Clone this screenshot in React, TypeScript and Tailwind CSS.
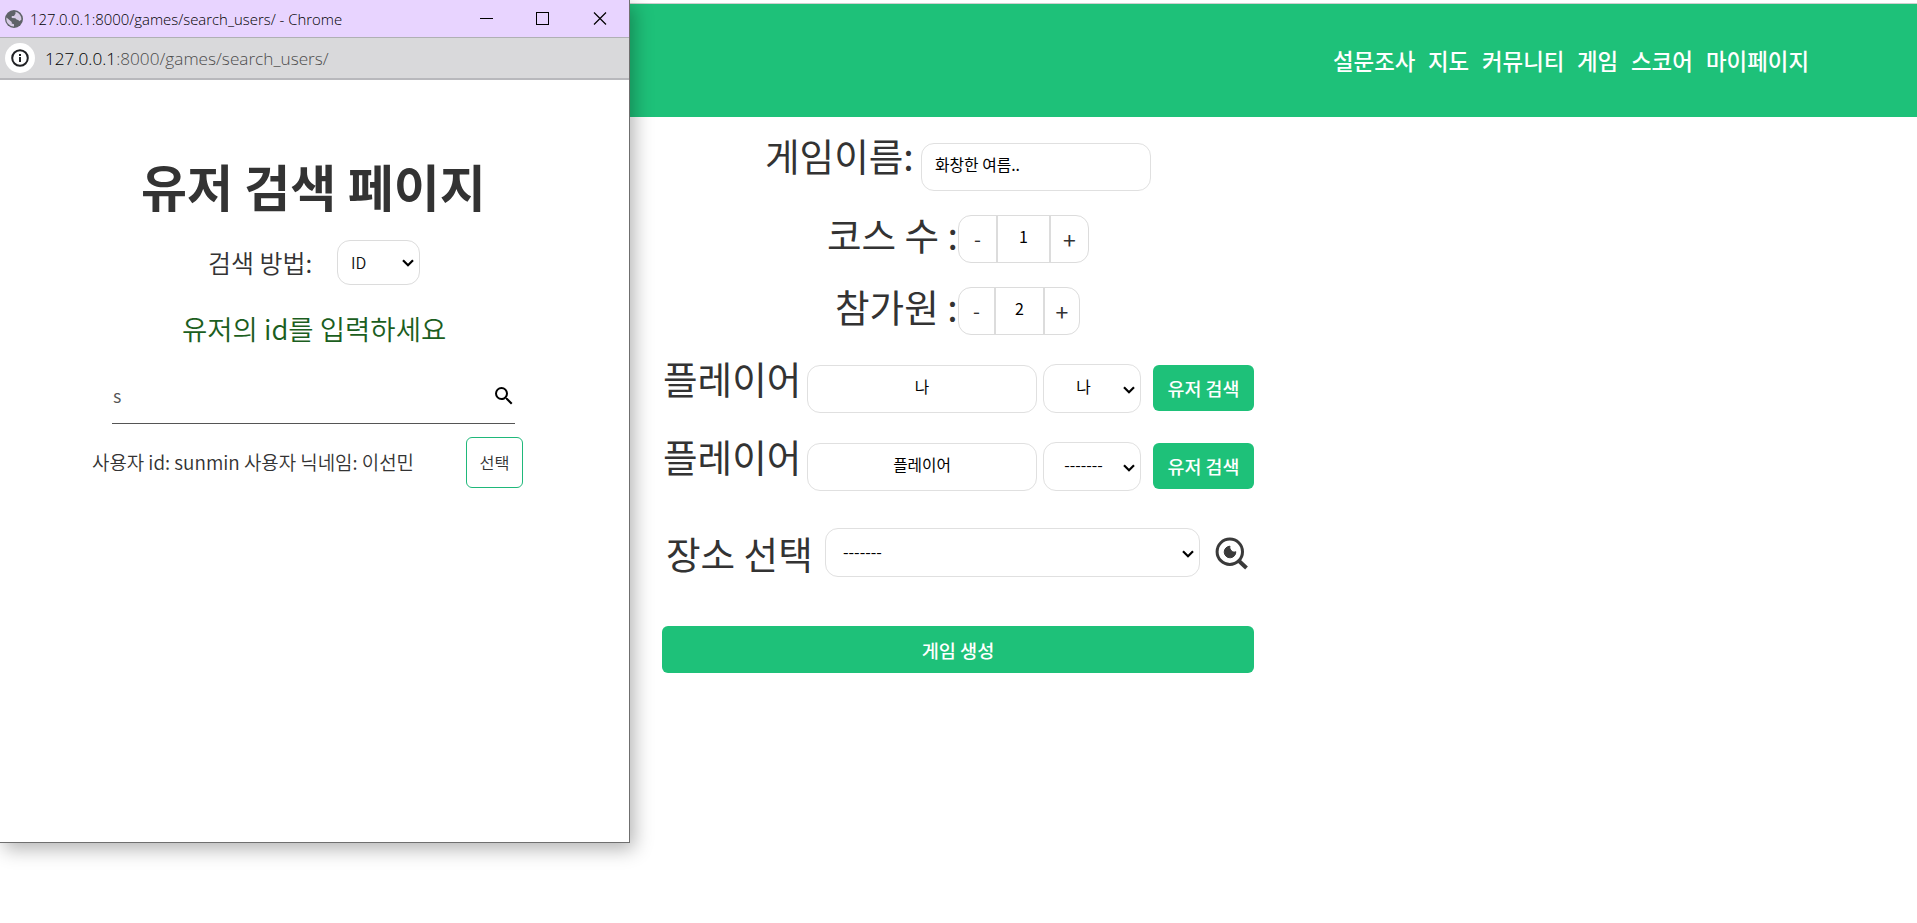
import type { ReactNode } from "react";
import { MdSearch } from "react-icons/md";

const NAV = [
  { label: "설문조사", width: "w-[95px]" },
  { label: "지도", width: "w-[54px]" },
  { label: "커뮤니티", width: "w-[95px]" },
  { label: "게임", width: "w-[54px]" },
  { label: "스코어", width: "w-[75px]" },
  { label: "마이페이지", width: "w-[110px]" },
];

function Chevron({ className }: { className: string }) {
  return (
    <svg viewBox="0 0 12 8" className={`h-2 w-3 shrink-0 ${className}`} fill="none" stroke="#000" strokeWidth="2.2">
      <path d="M1 1.2 L6 6.2 L11 1.2" />
    </svg>
  );
}

function Label({ children, className }: { children: ReactNode; className: string }) {
  return <span className={`shrink-0 whitespace-pre text-[37.6px] leading-[38px] text-[#333] ${className}`}>{children}</span>;
}

function Stepper({ value, left, middle, right }: { value: number; left: string; middle: string; right: string }) {
  return (
    <div className="flex h-12 rounded-[13px] border border-[#dcdcdc] text-[#333]">
      <button className={`${left} text-[20px] leading-[44px]`}>-</button>
      <span className={`${middle} border-x-2 border-[#dcdcdc] text-center text-[16px] leading-[40px] text-black`}>{value}</span>
      <button className={`${right} text-[23px] leading-[43px]`}>+</button>
    </div>
  );
}

function PlayerRow({ name, option, className }: { name: string; option: string; className: string }) {
  return (
    <div className={`flex items-start ${className}`}>
      <Label className="w-[145px] pl-px text-[37.4px]">플레이어</Label>
      <div className="mt-1.5 h-12 w-[230px] rounded-[13px] border border-[#e0e0e0] text-center text-[15.7px] leading-[42px] text-black">{name}</div>
      <div className="ml-1.5 mt-[5px] flex h-[49px] w-[98px] rounded-[13px] border border-[#e0e0e0]">
        <span className="w-[79px] text-center text-[15.8px] leading-[43px] text-black">{option}</span>
        <Chevron className="mt-[21px]" />
      </div>
      <button className="ml-3 mt-1.5 h-[46px] w-[101px] rounded-[6px] bg-[#1ec179] text-[18.4px] font-medium leading-[43px] text-white">유저 검색</button>
    </div>
  );
}

function GamePage() {
  return (
    <div className="flex h-full flex-col">
      <div className="mt-[3px] h-px bg-[#cfcfcf]" />
      <header className="flex h-[113px] justify-end bg-[#1ec179] pr-[101px]">
        <nav className="flex pt-10">
          {NAV.map((item) => (
            <a key={item.label} className={`${item.width} whitespace-nowrap text-[22.4px] font-medium leading-[32px] text-white`}>
              {item.label}
            </a>
          ))}
        </nav>
      </header>
      <main className="ml-[662px] flex w-[592px] flex-col pt-[19px]">
        <div className="flex h-[79px] items-start pl-[103px]">
          <Label className="w-[156px]">게임이름:</Label>
          <div className="mt-[7px] h-12 w-[230px] rounded-[13px] border border-[#e0e0e0] pl-[13px] text-[15.8px] leading-[41px] text-black">화창한 여름..</div>
        </div>
        <div className="flex h-[72px] items-start pl-[165px]">
          <Label className="w-[131px]">코스 수 :</Label>
          <Stepper value={1} left="w-[37px]" middle="w-[55px]" right="w-[37px]" />
        </div>
        <div className="flex h-[72px] items-start pl-[173px]">
          <Label className="w-[123px]">참가원 :</Label>
          <Stepper value={2} left="w-[35px]" middle="w-[51px]" right="w-[34px]" />
        </div>
        <PlayerRow name="나" option="나" className="h-[78px]" />
        <PlayerRow name="플레이어" option="-------" className="h-[91px]" />
        <div className="flex h-[98px] items-start pl-1">
          <Label className="mt-1.5 w-[159px]">장소 선택</Label>
          <div className="flex h-[49px] w-[375px] rounded-[13px] border border-[#e0e0e0]">
            <span className="w-[356px] pl-[17px] text-[16px] leading-[45px] text-black">-------</span>
            <Chevron className="mt-[21px]" />
          </div>
          <svg viewBox="0 0 34 34" className="ml-[15px] mt-[9px] size-[34px]" fill="none">
            <circle cx="14.8" cy="14.7" r="12.7" stroke="#3a3a3a" strokeWidth="3" />
            <path d="M23.5 23.5 L31.5 31" stroke="#3a3a3a" strokeWidth="4" />
            <path d="M15 9.2 A5.8 5.8 0 1 0 20.8 14.7 C18.5 16.2 13.8 13 15 9.2Z" fill="#3a3a3a" stroke="#3a3a3a" strokeWidth="1" />
          </svg>
        </div>
        <button className="h-[47px] rounded-[6px] bg-[#1ec179] text-[18.6px] font-medium leading-[43px] text-white">게임 생성</button>
      </main>
    </div>
  );
}

function PopupWindow() {
  return (
    <section className="absolute left-0 top-0 flex h-[843px] w-[630px] flex-col border-b border-r border-[#6f6f6f] bg-white shadow-[4px_6px_18px_rgba(0,0,0,0.3)]">
      <div className="flex h-[38px] shrink-0 items-center border-b border-[#b0b0b4] bg-[#e8d4ff]">
        <svg viewBox="0 0 24 24" className="ml-[5px] size-[18px] shrink-0">
          <circle cx="12" cy="12" r="12" fill="#5f6368" />
          <path d="M2 10 L9 16 V18 L12 19 V22 A10 10 0 0 1 2 10Z M14 2.3 A10 10 0 0 1 21.8 13 L19 15 C18 12 15 14 14 11 L9 10.5 V8 H12 L14 5Z" fill="#d6cbe4" />
        </svg>
        <span className="ml-[7px] w-[433px] whitespace-nowrap pt-px font-['Open_Sans','Noto_Sans',sans-serif] text-[14.9px] font-[350] text-black">127.0.0.1:8000/games/search_users/ - Chrome</span>
        <svg viewBox="0 0 128 14" className="ml-[17px] h-3.5 w-32" fill="none" stroke="#000" strokeWidth="1" shapeRendering="crispEdges">
          <path d="M0 6.5H13 M56.5 .5H68.5V12.5H56.5Z" />
          <path d="M114 .5L126 12.5 M126 .5L114 12.5" shapeRendering="auto" strokeWidth="1.2" />
        </svg>
      </div>
      <div className="flex h-[42px] shrink-0 items-center border-b-2 border-[#b8b8bc] bg-[#d9d9db]">
        <span className="ml-[5px] flex size-[30px] items-center justify-center rounded-full bg-white">
          <svg viewBox="0 0 18 18" className="size-[18px]" fill="none" stroke="#202124" strokeWidth="2">
            <circle cx="9" cy="9" r="7.8" />
            <path d="M9 8V13 M9 5V7" />
          </svg>
        </span>
        <span className="ml-2.5 whitespace-nowrap pt-px font-['Open_Sans','Noto_Sans',sans-serif] text-[17.2px] font-[350] text-[#4c4c4c]">
          <span className="text-black">127.0.0.1</span>:8000/games/search_users/
        </span>
      </div>
      <div className="flex flex-col">
        <h1 className="mt-[75px] pl-[141px] text-[50px] font-bold leading-[60px] text-[#333]">유저 검색 페이지</h1>
        <div className="mt-[25px] flex h-[72px] pl-[208px] font-[350]">
          <span className="w-[129px] text-[25px] leading-[44px] text-[#333]">검색 방법:</span>
          <div className="flex h-[45px] w-[83px] rounded-[13px] border border-[#dcdcdc]">
            <span className="w-16 pl-[13px] text-[15.8px] leading-[43px] text-[#111]">ID</span>
            <Chevron className="mt-[18px]" />
          </div>
        </div>
        <p className="mt-[-1px] pl-[182px] text-[27.5px] font-[350] leading-[34px] text-[#1b5e20]">유저의 id를 입력하세요</p>
        <div className="ml-28 mt-[25px] flex h-[54px] w-[403px] justify-between border-b border-[#555]">
          <span className="pl-px text-[18px] font-[350] leading-[51px] text-[#555]">s</span>
          <MdSearch className="mr-[-1px] mt-[14px] size-6 text-black" />
        </div>
        <div className="flex pl-[92px] pt-[13px] font-[350]">
          <span className="w-[374px] text-[18.9px] leading-[50px] text-[#333]">사용자 id: sunmin 사용자 닉네임: 이선민</span>
          <button className="h-[51px] w-[57px] rounded-[6px] border border-[#1fb87a] text-[16.3px] leading-[47px] text-[#333]">선택</button>
        </div>
      </div>
    </section>
  );
}

export default function App() {
  return (
    <div className="relative h-[923px] w-[1917px] overflow-hidden bg-white font-['Noto_Sans_CJK_KR',sans-serif]">
      <GamePage />
      <PopupWindow />
    </div>
  );
}
